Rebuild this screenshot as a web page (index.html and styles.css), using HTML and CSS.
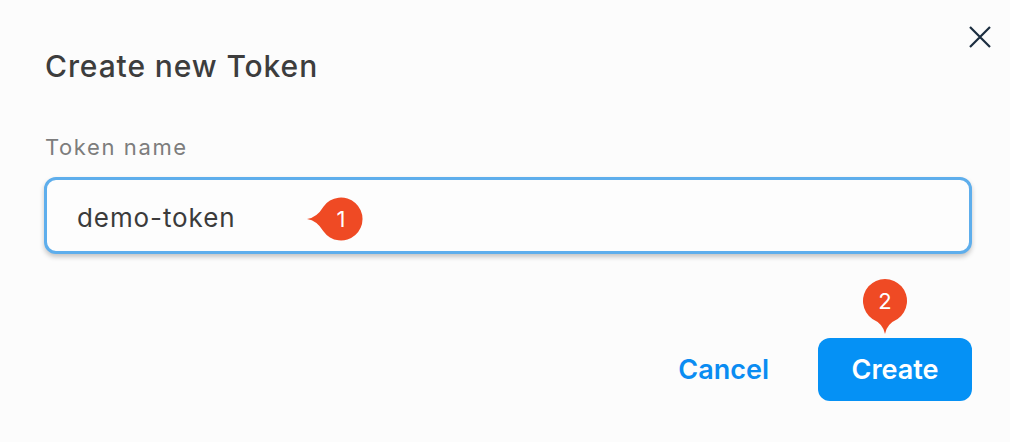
FILE: index.html
```html
<!DOCTYPE html>
<html lang="en">
<head>
<meta charset="utf-8">
<title>Create new Token</title>
<link rel="stylesheet" href="styles.css">
</head>
<body>
<div class="dialog">
  <button class="close" aria-label="Close">
    <svg width="22" height="22" viewBox="0 0 22 22"><path d="M1 1 L21 21 M21 1 L1 21" stroke="#1b2d3f" stroke-width="2.2" stroke-linecap="butt" fill="none"/></svg>
  </button>
  <h1 class="title">Create new Token</h1>
  <label class="label" for="token">Token name</label>
  <div class="field">
    <div class="input" id="token">demo-token</div>
    <svg class="pin pin-left" width="58" height="44" viewBox="0 0 58 44">
      <path d="M2 22 Q12 20.5 18.4 9.7 A21.5 21.5 0 1 1 18.4 34.3 Q12 23.5 2 22 Z" fill="#ef4a24"/>
      <text x="36" y="30" text-anchor="middle" class="pin-num">1</text>
    </svg>
  </div>
  <div class="actions">
    <button class="btn-cancel">Cancel</button>
    <div class="create-wrap">
      <svg class="pin pin-down" width="46" height="58" viewBox="0 0 46 58">
        <path d="M23 56 Q21.5 46 10.4 41 A22 22 0 1 1 35.6 41 Q24.5 46 23 56 Z" fill="#ef4a24"/>
        <text x="23" y="31" text-anchor="middle" class="pin-num">2</text>
      </svg>
      <button class="btn-create">Create</button>
    </div>
  </div>
</div>
</body>
</html>
```

FILE: styles.css
```css
* { box-sizing: border-box; }
html, body {
  margin: 0;
  padding: 0;
  background: #fcfcfc;
}
body {
  font-family: "Inter", "Noto Sans", "Liberation Sans", sans-serif;
}
.dialog {
  position: relative;
  width: 1010px;
  height: 442px;
  padding: 48px 38px 0 44px;
  display: flex;
  flex-direction: column;
}
.close {
  position: absolute;
  left: 969px;
  top: 26px;
  width: 22px;
  height: 22px;
  padding: 0;
  border: 0;
  background: none;
  display: block;
}
.close svg { display: block; }
.title {
  margin: 0 0 0 1px;
  font-size: 30px;
  line-height: 36px;
  font-weight: 500;
  color: #3d3d3d;
  letter-spacing: 0.9px;
}
.label {
  margin: 50px 0 0 1px;
  font-size: 22px;
  line-height: 26px;
  color: #7d7d7d;
  letter-spacing: 1.6px;
}
.field {
  position: relative;
  margin-top: 17px;
}
.input {
  height: 77px;
  border: 3px solid #5eaeec;
  border-radius: 12px;
  background: #fdfdfd;
  box-shadow: 0 3px 5px rgba(0, 0, 0, 0.22);
  padding: 0 28px 0 30px;
  display: flex;
  align-items: center;
  padding-top: 3px;
  font-size: 26px;
  color: #3b3b3b;
  letter-spacing: 0.9px;
}
.pin {
  position: absolute;
  display: block;
}
.pin-left {
  left: 261px;
  top: 20px;
}
.pin-num {
  fill: #ffffff;
  font-family: "Inter", "Noto Sans", sans-serif;
  font-size: 22px;
}
.actions {
  margin-top: 84px;
  display: flex;
  justify-content: flex-end;
  align-items: center;
  gap: 44px;
}
.btn-cancel {
  border: 0;
  background: none;
  padding: 0 5px;
  font-family: inherit;
  font-size: 27px;
  font-weight: 600;
  color: #0a8cf2;
}
.create-wrap {
  position: relative;
}
.pin-down {
  left: 44px;
  top: -60px;
}
.btn-create {
  width: 154px;
  height: 63px;
  border: 0;
  border-radius: 12px;
  background: #0591f5;
  color: #ffffff;
  font-family: inherit;
  font-size: 27px;
  font-weight: 600;
  padding: 0;
}
```
